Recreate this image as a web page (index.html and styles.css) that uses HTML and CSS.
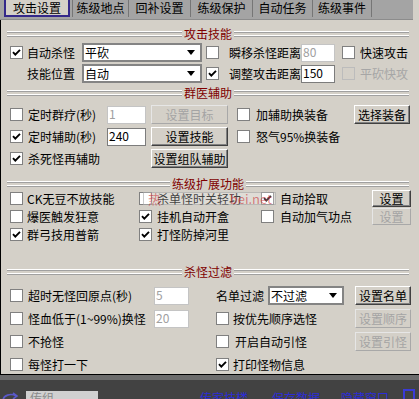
FILE: index.html
```html
<!DOCTYPE html>
<html lang="zh-CN">
<head>
<meta charset="UTF-8" />
<title>攻击设置</title>
<link rel="stylesheet" href="styles.css">
</head>
<body>
    <!-- Tab strip -->
    <div class="tabs">
        <div class="tab tab-active">攻击设置</div>
        <div class="tab w56">练级地点</div>
        <div class="tab w62">回补设置</div>
        <div class="tab w62">练级保护</div>
        <div class="tab w60">自动任务</div>
        <div class="tab w60 tab-last">练级事件</div>
    </div>

    <div class="panel">
        <!-- 攻击技能 -->
        <div class="sec-head"><span class="rule"></span><span class="sec-title">攻击技能</span><span class="rule"></span></div>
        <div class="rows rows-attack">
            <div class="row">
                <label class="check w72"><span class="box on"><svg viewBox="0 0 11 11"><path d="M2 5.2 L4.3 7.6 L9 2.8"/></svg></span>自动杀怪</label>
                <div class="select w120"><span>平砍</span><i class="arrow"></i></div>
                <label class="check w95 ml4 gap10"><span class="box"></span>瞬移杀怪距离</label>
                <div class="input w34 disabled">80</div>
                <label class="check ml7 gap5"><span class="box"></span>快速攻击</label>
            </div>
            <div class="row">
                <div class="label w72 pl17">技能位置</div>
                <div class="select w120"><span>自动</span><i class="arrow"></i></div>
                <label class="check w95 ml4 gap10"><span class="box on"><svg viewBox="0 0 11 11"><path d="M2 5.2 L4.3 7.6 L9 2.8"/></svg></span>调整攻击距离</label>
                <div class="input w34">150</div>
                <label class="check ml7 gap5 disabled"><span class="box"></span>平砍快攻</label>
            </div>
        </div>

        <!-- 群医辅助 -->
        <div class="sec-head sec-heal"><span class="rule"></span><span class="sec-title">群医辅助</span><span class="rule"></span></div>
        <div class="rows rows-heal">
            <div class="row">
                <label class="check w97 gap5"><span class="box"></span>定时群疗(秒)</label>
                <div class="input w39 disabled">1</div>
                <button class="btn w77 ml5" disabled>设置目标</button>
                <label class="check w117 ml9 gap6"><span class="box"></span>加辅助换装备</label>
                <button class="btn w56">选择装备</button>
            </div>
            <div class="row">
                <label class="check w97 gap5"><span class="box on"><svg viewBox="0 0 11 11"><path d="M2 5.2 L4.3 7.6 L9 2.8"/></svg></span>定时辅助(秒)</label>
                <div class="input w39">240</div>
                <button class="btn w77 ml5">设置技能</button>
                <label class="check w117 ml9 gap6"><span class="box"></span>怒气95%换装备</label>
            </div>
            <div class="row">
                <label class="check w141 gap5"><span class="box on"><svg viewBox="0 0 11 11"><path d="M2 5.2 L4.3 7.6 L9 2.8"/></svg></span>杀死怪再辅助</label>
                <button class="btn w77">设置组队辅助</button>
            </div>
        </div>

        <!-- 练级扩展功能 -->
        <div class="sec-head sec-ext"><span class="rule"></span><span class="sec-title">练级扩展功能</span><span class="rule"></span></div>
        <div class="rows rows-ext">
            <div class="row">
                <label class="check w129"><span class="box"></span>CK无豆不放技能</label>
                <label class="check w122 gap5"><span class="box"></span>杀单怪时关轻功</label>
                <label class="check w111 gap7"><span class="box on"><svg viewBox="0 0 11 11"><path d="M2 5.2 L4.3 7.6 L9 2.8"/></svg></span>自动拾取</label>
                <button class="btn w39">设置</button>
            </div>
            <div class="row">
                <label class="check w129"><span class="box"></span>爆医触发狂意</label>
                <label class="check w122 gap5"><span class="box on"><svg viewBox="0 0 11 11"><path d="M2 5.2 L4.3 7.6 L9 2.8"/></svg></span>挂机自动开盒</label>
                <label class="check w111 gap7"><span class="box"></span>自动加气功点</label>
                <button class="btn w39" disabled>设置</button>
            </div>
            <div class="row">
                <label class="check w129"><span class="box on"><svg viewBox="0 0 11 11"><path d="M2 5.2 L4.3 7.6 L9 2.8"/></svg></span>群弓技用普箭</label>
                <label class="check w122 gap5"><span class="box on"><svg viewBox="0 0 11 11"><path d="M2 5.2 L4.3 7.6 L9 2.8"/></svg></span>打怪防掉河里</label>
            </div>
        </div>

        <!-- 杀怪过滤 -->
        <div class="sec-head sec-filter"><span class="rule"></span><span class="sec-title">杀怪过滤</span><span class="rule"></span></div>
        <div class="rows rows-filter">
            <div class="row">
                <label class="check w144 gap5"><span class="box"></span>超时无怪回原点(秒)</label>
                <div class="input w35 disabled">5</div>
                <div class="label w52 ml27">名单过滤</div>
                <div class="select w76"><span>不过滤</span><i class="arrow"></i></div>
                <button class="btn w56 ml11">设置名单</button>
            </div>
            <div class="row">
                <label class="check w144 gap5"><span class="box"></span>怪血低于(1~99%)换怪</label>
                <div class="input w35 disabled">20</div>
                <label class="check w139 ml27"><span class="box"></span>按优先顺序选怪</label>
                <button class="btn w56" disabled>设置顺序</button>
            </div>
            <div class="row">
                <label class="check w144 gap5"><span class="box"></span>不抢怪</label>
                <label class="check w139 ml62 gap6"><span class="box"></span>开启自动引怪</label>
                <button class="btn w56" disabled>设置引怪</button>
            </div>
            <div class="row">
                <label class="check w144 gap5"><span class="box"></span>每怪打一下</label>
                <label class="check w139 ml62"><span class="box on"><svg viewBox="0 0 11 11"><path d="M2 5.2 L4.3 7.6 L9 2.8"/></svg></span>打印怪物信息</label>
            </div>
        </div>

        <!-- site watermark over the screenshot -->
        <div class="watermark"><span>热</span><span>bei.net</span></div>
    </div>

    <!-- Bottom bar, cut off by the window -->
    <div class="footer">
        <svg class="foot-icon" viewBox="0 0 18 12"><path d="M2 9 C2 3, 10 1, 15 4 M12 1 L16 4 L12 7 M3 11 C8 12, 13 10, 16 8"/></svg>
        <div class="foot-input">传组</div>
        <span class="foot-link ml102">传家技楼</span>
        <span class="foot-link ml24">保存数据</span>
        <span class="foot-link ml21">隐藏窗口</span>
        <span class="foot-box"></span>
    </div>
</body>
</html>
```

FILE: styles.css
```css
html, body {
    margin: 0;
    padding: 0;
}

body {
    width: 419px;
    height: 399px;
    overflow: hidden;
    background: #d4d0c8;
    font-family: "Noto Sans CJK SC", "Liberation Sans", sans-serif;
    font-size: 12px;
    line-height: 14px;
    color: #000;
}

/* tabs */
.tabs {
    display: flex;
    align-items: flex-start;
    width: 413px;
    height: 20px;
    background: #a4a4a4;
    box-sizing: border-box;
    border-bottom: 1px solid #8c8c8c;
    padding-left: 4px;
}

.tab {
    height: 17px;
    line-height: 16px;
    text-align: center;
    box-sizing: border-box;
    border-left: 1px solid #767676;
}

.tab-active {
    width: 66px;
    margin-right: 2px;
    border: 2px solid #34288a;
    border-top: none;
    background: #d4d0c8;
    line-height: 16px;
}

.tab-last { border-right: 1px solid #767676; }

/* panel */
.panel {
    position: relative;
    height: 347px;
    padding: 7px 0 0 6px;
    border-left: 1px solid #000;
    border-bottom: 1px solid #000;
}

.sec-head {
    display: flex;
    align-items: center;
    width: 402px;
    height: 13px;
}

.rule {
    flex: 1;
    height: 6px;
    background: linear-gradient(#fff 0 1px, #a0a0a0 1px 2px, transparent 2px 4px, #fff 4px 5px, #a0a0a0 5px 6px);
}

.sec-title {
    color: #800000;
    padding: 0 2px;
    line-height: 13px;
}

.sec-heal { margin-top: 3px; }
.sec-ext { margin-top: 9px; }
.sec-filter { margin-top: 22px; }

.rows {
    display: flex;
    flex-direction: column;
    padding-left: 3px;
}

.rows-attack { margin-top: 3px; gap: 2px; }
.rows-heal { margin-top: 6px; gap: 3px; }
.rows-ext { margin-top: 0; gap: 1px; }
.rows-filter { margin-top: 8px; gap: 4px; }

.row {
    display: flex;
    align-items: center;
    height: 19px;
}

.rows-ext .row { height: 17px; }

/* controls */
.check {
    display: flex;
    align-items: center;
    white-space: nowrap;
    flex: none;
}

.box {
    width: 13px;
    height: 13px;
    box-sizing: border-box;
    border: 1px solid #808080;
    background: #fff;
    margin-right: 4px;
    flex: none;
    display: flex;
}

.box svg {
    width: 11px;
    height: 11px;
    fill: none;
    stroke: #000;
    stroke-width: 1.9;
}

.gap5 .box { margin-right: 5px; }
.gap6 .box { margin-right: 6px; }
.gap7 .box { margin-right: 6px; }
.gap10 .box { margin-right: 10px; }

.check.disabled { color: #a6a6a6; }
.check.disabled .box { border-color: #bcbcbc; background: #d4d0c8; }

.label { flex: none; white-space: nowrap; }

.select {
    flex: none;
    height: 19px;
    box-sizing: border-box;
    border: 2px solid #848484;
    background: #fff;
    display: flex;
    align-items: center;
    justify-content: space-between;
    padding: 0 5px 0 1px;
}

.arrow {
    width: 0;
    height: 0;
    border-left: 4px solid transparent;
    border-right: 4px solid transparent;
    border-top: 5px solid #000;
}

.input {
    flex: none;
    height: 18px;
    box-sizing: border-box;
    border: 1px solid #7c7c7c;
    background: #fff;
    padding-left: 1px;
    line-height: 14px;
}

.input.disabled {
    border-color: #c4c4c4;
    color: #a0a0a0;
}

.btn {
    flex: none;
    height: 19px;
    box-sizing: border-box;
    padding: 0;
    font: inherit;
    line-height: 14px;
    color: #000;
    background: #d4d0c8;
    border: 1px solid;
    border-color: #fff #404040 #404040 #fff;
    box-shadow: inset -1px -1px #808080;
}

.rows-ext .btn { height: 17px; }

.btn:disabled {
    color: #a4a4a4;
    border-color: #e6e6e6 #a8a8a8 #a8a8a8 #e6e6e6;
    box-shadow: none;
}

/* widths and offsets */
.w34 { width: 34px; }
.w35 { width: 35px; }
.w39 { width: 39px; }
.w52 { width: 52px; }
.w56 { width: 56px; }
.w60 { width: 60px; }
.w62 { width: 62px; }
.w72 { width: 72px; }
.w76 { width: 76px; }
.w77 { width: 77px; }
.w95 { width: 95px; }
.w97 { width: 97px; }
.w111 { width: 111px; }
.w117 { width: 117px; }
.w120 { width: 120px; }
.w122 { width: 122px; }
.w129 { width: 129px; }
.w139 { width: 139px; }
.w141 { width: 141px; }
.w144 { width: 144px; }

.ml4 { margin-left: 4px; }
.ml5 { margin-left: 5px; }
.ml7 { margin-left: 7px; }
.ml9 { margin-left: 9px; }
.ml11 { margin-left: 11px; }
.ml27 { margin-left: 27px; }
.ml62 { margin-left: 62px; }
.pl17 { padding-left: 17px; box-sizing: border-box; }

.watermark {
    position: absolute;
    left: 142px;
    top: 172px;
    width: 133px;
    height: 13px;
    box-sizing: border-box;
    border: 1px solid rgba(150,150,150,0.5);
    background: rgba(255,255,255,0.25);
    display: flex;
    justify-content: space-between;
    padding: 0 3px 0 4px;
    color: rgba(200,30,40,0.55);
    font-size: 13px;
    line-height: 11px;
    pointer-events: none;
}

/* footer strip */
.footer {
    display: flex;
    align-items: flex-start;
    height: 24px;
    box-sizing: border-box;
    border-top: 5px solid #6c6c6c;
    background: #424242;
    padding-top: 11px;
    overflow: hidden;
}

.foot-icon {
    width: 18px;
    height: 12px;
    margin-left: 1px;
    margin-top: 1px;
    fill: none;
    stroke: #5a58c8;
    stroke-width: 1.6;
}

.foot-input {
    width: 72px;
    height: 14px;
    margin-left: 7px;
    background: #d0d0d0;
    color: #8a8a8a;
    padding-left: 4px;
    box-sizing: border-box;
}

.foot-link {
    color: #2c2cd8;
    white-space: nowrap;
}

.ml102 { margin-left: 102px; }
.ml24 { margin-left: 24px; }
.ml21 { margin-left: 21px; }

.foot-box {
    width: 12px;
    height: 12px;
    margin-left: 14px;
    margin-top: -2px;
    border: 2px solid #3a3ad8;
    box-sizing: border-box;
}
```
